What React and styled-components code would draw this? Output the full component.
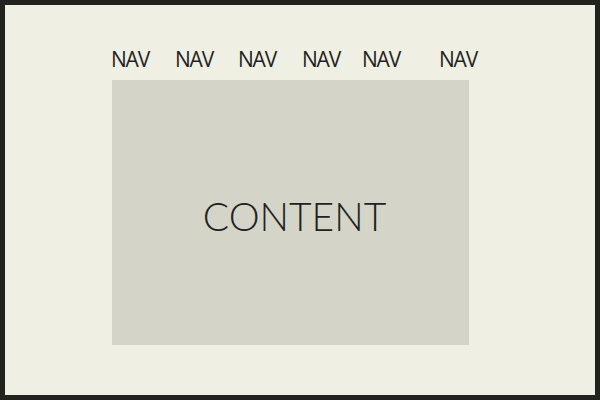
import React from "react";
import styled, { createGlobalStyle } from "styled-components";

const Global = createGlobalStyle`
  html, body { margin: 0; padding: 0; background: #efefe4; }
  * { box-sizing: border-box; }
`;

const Frame = styled.div`
  width: 600px;
  height: 400px;
  border: 5px solid #22221e;
  background: #efefe4;
  display: flex;
  flex-direction: column;
  padding-top: 38px;
`;

const NavBar = styled.nav`
  display: flex;
  align-items: center;
  height: 32px;
  padding-left: 106px;
  margin-bottom: 5px;
`;

const NavItem = styled.a`
  display: block;
  width: 37px;
  text-align: center;
  white-space: nowrap;
  font-family: "Open Sans", Lato, sans-serif;
  font-weight: 400;
  font-size: 21px;
  letter-spacing: -1.2px;
  line-height: 32px;
  color: #22221e;
  text-decoration: none;
  margin-left: ${(p) => p.$gap}px;
`;

const Content = styled.main`
  margin-left: 107px;
  width: 357px;
  height: 265px;
  background: #d4d5c8;
  display: flex;
  align-items: center;
  justify-content: center;
  font-family: Lato, "Liberation Sans", sans-serif;
  font-weight: 300;
  font-size: 39px;
  color: #22221e;
  letter-spacing: 0px;
  padding: 6px 0 0 8px;
`;

const gaps = [0, 27, 26, 27, 23, 40];

export default function App() {
  return (
    <>
      <Global />
      <Frame>
        <NavBar>
          {gaps.map((g, i) => (
            <NavItem key={i} $gap={g}>NAV</NavItem>
          ))}
        </NavBar>
        <Content>CONTENT</Content>
      </Frame>
    </>
  );
}
